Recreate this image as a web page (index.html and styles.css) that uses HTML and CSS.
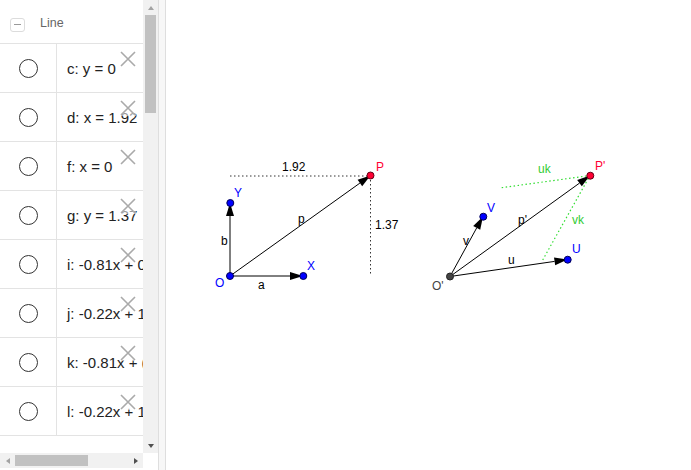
FILE: index.html
```html
<!DOCTYPE html>
<html>
<head>
<meta charset="utf-8">
<link rel="stylesheet" href="styles.css">
</head>
<body>
<div class="app">
  <div class="panel">
    <div class="list">
      <div class="header"><span class="toggle"></span><span class="title">Line</span></div>
      <div class="row"><div class="mark"><span class="radio"></span></div><div class="def"><span class="expr">c: y = 0</span><svg class="del" viewBox="0 0 16 16"><path d="M1 1L15 15M15 1L1 15"/></svg></div></div>
      <div class="row"><div class="mark"><span class="radio"></span></div><div class="def"><span class="expr">d: x = 1.92</span><svg class="del" viewBox="0 0 16 16"><path d="M1 1L15 15M15 1L1 15"/></svg></div></div>
      <div class="row"><div class="mark"><span class="radio"></span></div><div class="def"><span class="expr">f: x = 0</span><svg class="del" viewBox="0 0 16 16"><path d="M1 1L15 15M15 1L1 15"/></svg></div></div>
      <div class="row"><div class="mark"><span class="radio"></span></div><div class="def"><span class="expr">g: y = 1.37</span><svg class="del" viewBox="0 0 16 16"><path d="M1 1L15 15M15 1L1 15"/></svg></div></div>
      <div class="row"><div class="mark"><span class="radio"></span></div><div class="def"><span class="expr">i: -0.81x + 0</span><svg class="del" viewBox="0 0 16 16"><path d="M1 1L15 15M15 1L1 15"/></svg></div></div>
      <div class="row"><div class="mark"><span class="radio"></span></div><div class="def"><span class="expr">j: -0.22x + 1</span><svg class="del" viewBox="0 0 16 16"><path d="M1 1L15 15M15 1L1 15"/></svg></div></div>
      <div class="row"><div class="mark"><span class="radio"></span></div><div class="def"><span class="expr">k: -0.81x + (</span><svg class="del" viewBox="0 0 16 16"><path d="M1 1L15 15M15 1L1 15"/></svg></div></div>
      <div class="row"><div class="mark"><span class="radio"></span></div><div class="def"><span class="expr">l: -0.22x + 1</span><svg class="del" viewBox="0 0 16 16"><path d="M1 1L15 15M15 1L1 15"/></svg></div></div>
    </div>
    <div class="vscroll">
      <span class="btn"><span class="arr up"></span></span>
      <span class="vthumb"></span>
      <span class="fill"></span>
      <span class="btn"><span class="arr down"></span></span>
    </div>
    <div class="hscroll">
      <span class="btn"><span class="arr left"></span></span>
      <span class="hthumb"></span>
      <span class="fill"></span>
      <span class="btn"><span class="arr right"></span></span>
    </div>
    <div class="corner"></div>
  </div>
  <div class="divider"></div>
  <div class="canvas">
    <svg class="board" width="525" height="470" viewBox="166 0 525 470">
      <g class="dots">
        <path d="M230 176H370.5M370.5 176V276"/>
      </g>
      <g class="gdots">
        <path d="M501.7 187.7L590 175.5M542.7 260L590 175.5"/>
      </g>
      <g class="vec">
        <path d="M230 276H290"/>
        <polygon points="303,276 290,272 290,280"/>
        <path d="M230 276V216"/>
        <polygon points="230,203 226,216 234,216"/>
        <path d="M230 276L359.9 183.1"/>
        <polygon points="370.5,175.5 362.2,186.3 357.6,179.8"/>
        <path d="M450 276.5L476.7 227.9"/>
        <polygon points="483,216.5 480.2,229.8 473.2,226"/>
        <path d="M450 276.5L554.6 261.4"/>
        <polygon points="567.5,259.5 555.2,265.3 554,257.4"/>
        <path d="M450 276.5L579.5 183.1"/>
        <polygon points="590,175.5 581.8,186.3 577.2,179.9"/>
      </g>
      <g class="pt blue">
        <circle cx="230" cy="276" r="3.5"/>
        <circle cx="303.3" cy="276" r="3.5"/>
        <circle cx="230.3" cy="203" r="3.5"/>
        <circle cx="483.3" cy="216.7" r="3.5"/>
        <circle cx="567.7" cy="259.7" r="3.5"/>
      </g>
      <g class="pt red">
        <circle cx="370.5" cy="175.5" r="3.5"/>
        <circle cx="590.3" cy="175.7" r="3.5"/>
      </g>
      <g class="pt gray">
        <circle cx="450" cy="276.5" r="3.5"/>
      </g>
      <g class="lbl">
        <text x="282" y="171">1.92</text>
        <text x="221" y="245">b</text>
        <text x="298" y="223">p</text>
        <text x="375" y="228.5">1.37</text>
        <text x="258" y="289">a</text>
        <text x="463" y="245">v</text>
        <text x="518" y="224">p'</text>
        <text x="508" y="264">u</text>
        <text class="lgray" x="432" y="290">O'</text>
        <text class="lblue" x="215" y="287">O</text>
        <text class="lblue" x="307" y="270">X</text>
        <text class="lblue" x="234" y="197">Y</text>
        <text class="lblue" x="487" y="212">V</text>
        <text class="lblue" x="572" y="253">U</text>
        <text class="lred" x="376" y="171">P</text>
        <text class="lred" x="595" y="170">P'</text>
        <text class="lgreen" x="538" y="173">uk</text>
        <text class="lgreen" x="572" y="224">vk</text>
      </g>
    </svg>
  </div>
</div>
</body>
</html>
```
FILE: styles.css
```css
* { box-sizing: border-box; }
html, body { margin: 0; padding: 0; background: #fff; }
body { width: 691px; height: 470px; overflow: hidden; font-family: "Liberation Sans", Arial, sans-serif; }

.app { display: flex; width: 691px; height: 470px; }

.panel {
  display: grid;
  grid-template-columns: 143px 15px;
  grid-template-rows: 453px 17px;
  width: 158px;
  flex: none;
}

.list { overflow: hidden; background: #fff; }

.header {
  height: 44px;
  display: flex;
  align-items: center;
  padding-left: 10px;
  padding-top: 6px;
  border-bottom: 1px solid #e3e3e3;
}
.toggle {
  width: 15px; height: 14px;
  border: 1px solid #dcdcdc;
  border-radius: 3px;
  display: flex; align-items: center; justify-content: center;
}
.toggle::before {
  content: "";
  width: 7px; height: 1px;
  background: #9a9a9a;
}
.title { margin-left: 15px; font-size: 12.5px; color: #666; margin-top: -3px; }

.row {
  height: 49px;
  display: grid;
  grid-template-columns: 57px 1fr;
  border-bottom: 1px solid #e3e3e3;
}
.mark {
  display: flex; align-items: center; justify-content: center;
  border-right: 1px solid #e3e3e3;
  padding-left: 1px;
}
.radio {
  width: 19px; height: 19px;
  border: 1.3px solid #333;
  border-radius: 50%;
}
.def {
  position: relative;
  display: flex; align-items: center;
  padding-left: 10px;
  overflow: hidden;
  white-space: nowrap;
}
.expr { font-size: 15px; color: #222; padding-top: 1px; }
.del {
  position: absolute;
  left: 63px; top: 7px;
  width: 16px; height: 16px;
  stroke: #aaa; stroke-width: 1.6; fill: none;
  background: rgba(255, 255, 255, 0.55);
}

.vscroll, .hscroll { background: #f1f1f1; display: flex; }
.vscroll { flex-direction: column; }
.hscroll { height: 15px; align-self: start; }
.btn { width: 15px; height: 15px; flex: none; display: flex; align-items: center; justify-content: center; }
.fill { flex: 1; }
.vthumb { height: 98px; margin: 0 2px; background: #c1c1c1; flex: none; }
.hthumb { width: 73px; margin: 2px 0; background: #c1c1c1; flex: none; }
.arr { width: 0; height: 0; }
.arr.up { border-left: 3.5px solid transparent; border-right: 3.5px solid transparent; border-bottom: 4px solid #a3a3a3; }
.arr.down { border-left: 3.5px solid transparent; border-right: 3.5px solid transparent; border-top: 4px solid #505050; }
.arr.left { border-top: 3.5px solid transparent; border-bottom: 3.5px solid transparent; border-right: 4px solid #a3a3a3; }
.arr.right { border-top: 3.5px solid transparent; border-bottom: 3.5px solid transparent; border-left: 4px solid #505050; }
.corner { background: #fff; }

.divider {
  width: 8px; flex: none;
  background: #f7f7f7;
  border-left: 1px solid #dedede;
  border-right: 1px solid #dedede;
}

.canvas { flex: 1; background: #fff; }
.board { display: block; }
.dots path { stroke: #333; stroke-width: 1; stroke-dasharray: 1.5 2.5; fill: none; }
.gdots path { stroke: #33dd33; stroke-width: 1.2; stroke-dasharray: 1.5 2.5; fill: none; }
.vec path { stroke: #000; stroke-width: 1; fill: none; }
.vec polygon { fill: #000; }
.pt circle { stroke-width: 1; }
.pt.blue circle { fill: #0000ff; stroke: #000055; }
.pt.red circle { fill: #ff0033; stroke: #660014; }
.pt.gray circle { fill: #444; stroke: #222; }
.lbl text { font-family: "Liberation Sans", Arial, sans-serif; font-size: 12px; fill: #000; }
.lbl .lblue { fill: #0000ff; }
.lbl .lred { fill: #ff0033; }
.lbl .lgreen { fill: #33cc33; }
.lbl .lgray { fill: #444; }
```
